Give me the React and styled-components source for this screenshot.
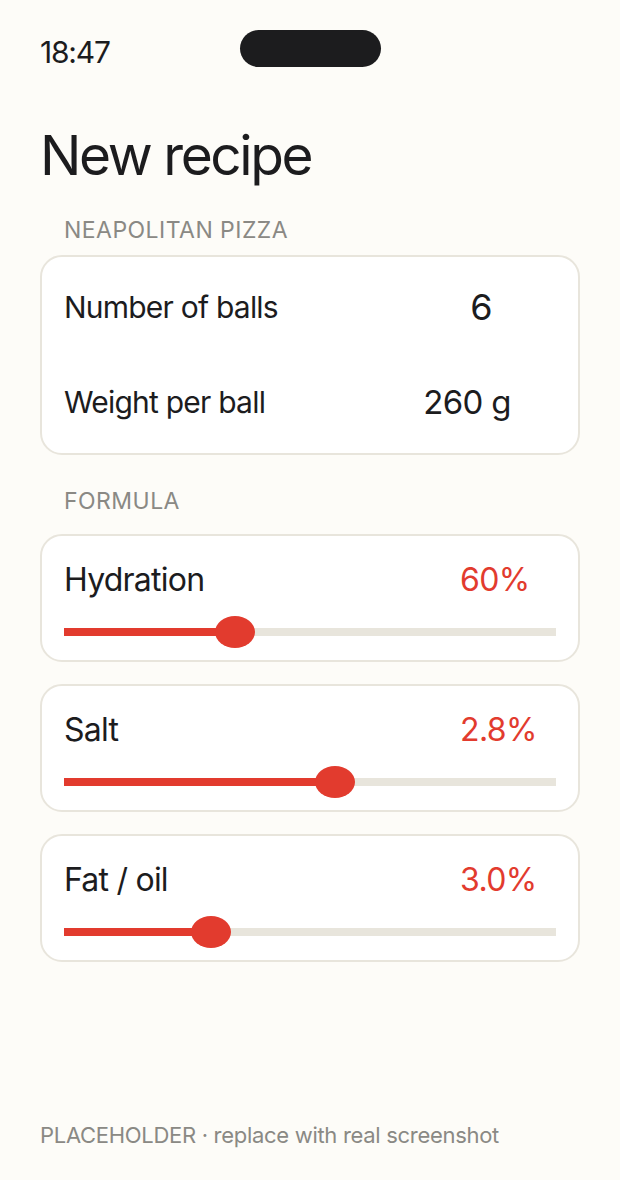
import styled, { createGlobalStyle } from "styled-components";

const GlobalStyle = createGlobalStyle`
  html, body {
    margin: 0;
    padding: 0;
    background: #fdfcf8;
  }
  body {
    font-family: Inter, "Noto Sans", sans-serif;
    color: #1c1c1e;
  }
`;

const sliders = [
  { label: "Hydration", value: "60%", pct: 0.335 },
  { label: "Salt", value: "2.8%", pct: 0.555 },
  { label: "Fat / oil", value: "3.0%", pct: 0.28 },
];

const App = () => {
  return (
    <>
      <GlobalStyle />
      <Screen>
        <StatusBar>
          <Time>18:47</Time>
          <Island />
          <span />
        </StatusBar>

        <Title>New recipe</Title>

        <SectionLabel top={31} bottom={12}>NEAPOLITAN PIZZA</SectionLabel>
        <Card>
          <InfoRow>
            <RowLabel>Number of balls</RowLabel>
            <BigValue size={36} shift={0}>6</BigValue>
          </InfoRow>
          <InfoRow>
            <RowLabel>Weight per ball</RowLabel>
            <BigValue size={33} shift={28}>260 g</BigValue>
          </InfoRow>
        </Card>

        <SectionLabel top={33} bottom={20}>FORMULA</SectionLabel>
        <SliderList>
          {sliders.map((s) => (
            <SliderCard key={s.label}>
              <SliderHead>
                <SliderLabel>{s.label}</SliderLabel>
                <Percent>{s.value}</Percent>
              </SliderHead>
              <Track>
                <Fill style={{ width: `calc(20px + (100% - 40px) * ${s.pct})` }} />
                <Thumb style={{ left: `calc((100% - 40px) * ${s.pct})` }} />
              </Track>
            </SliderCard>
          ))}
        </SliderList>

        <Footer>PLACEHOLDER · replace with real screenshot</Footer>
      </Screen>
    </>
  );
};

const Screen = styled.div`
  width: 620px;
  height: 1180px;
  box-sizing: border-box;
  padding: 30px 40px 0;
  display: flex;
  flex-direction: column;
  overflow: hidden;
`;

const StatusBar = styled.div`
  display: grid;
  grid-template-columns: 1fr auto 1fr;
  align-items: center;
  height: 37px;
`;

const Time = styled.div`
  padding-top: 8px;
  font-size: 30px;
  line-height: 29px;
  letter-spacing: -0.04em;
`;

const Island = styled.div`
  width: 141px;
  height: 37px;
  border-radius: 19px;
  background: #1c1c1e;
`;

const Title = styled.h1`
  margin: 57px 0 0;
  font-size: 55px;
  font-weight: 400;
  line-height: 62px;
  letter-spacing: -0.044em;
`;

const SectionLabel = styled.div`
  margin: ${({ top }) => top}px 0 ${({ bottom }) => bottom}px 24px;
  font-size: 23px;
  line-height: 26px;
  color: #8a8984;
  letter-spacing: 0.02em;
`;

const Card = styled.div`
  background: #fff;
  border: 2px solid #e8e5dc;
  border-radius: 22px;
  padding: 2px 22px 4px;
  display: flex;
  flex-direction: column;
`;

const InfoRow = styled.div`
  display: flex;
  align-items: center;
  justify-content: space-between;
  height: 95px;
`;

const RowLabel = styled.div`
  font-size: 30px;
  letter-spacing: -0.026em;
`;

const BigValue = styled.div`
  width: 150px;
  box-sizing: border-box;
  padding-right: ${({ shift }) => shift}px;
  text-align: center;
  font-size: ${({ size }) => size}px;
  letter-spacing: -0.02em;
`;

const SliderList = styled.div`
  display: flex;
  flex-direction: column;
  gap: 22px;
`;

const SliderCard = styled.div`
  background: #fff;
  border: 2px solid #e8e5dc;
  border-radius: 22px;
  height: 128px;
  box-sizing: border-box;
  padding: 25px 22px 0;
`;

const SliderHead = styled.div`
  display: flex;
  align-items: center;
  justify-content: space-between;
  height: 36px;
`;

const SliderLabel = styled.div`
  font-size: 32px;
  letter-spacing: -0.024em;
`;

const Percent = styled.div`
  width: 96px;
  font-size: 32px;
  color: #e23b2e;
  letter-spacing: -0.02em;
`;

const Track = styled.div`
  position: relative;
  margin-top: 31px;
  height: 8px;
  background: #e8e5dc;
`;

const Fill = styled.div`
  height: 100%;
  background: #e23b2e;
`;

const Thumb = styled.div`
  position: absolute;
  top: -12px;
  width: 40px;
  height: 32px;
  border-radius: 50%;
  background: #e23b2e;
`;

const Footer = styled.div`
  margin-top: auto;
  margin-bottom: 32px;
  font-size: 22px;
  color: #8a8984;
  letter-spacing: -0.3px;
`;

export default App;
